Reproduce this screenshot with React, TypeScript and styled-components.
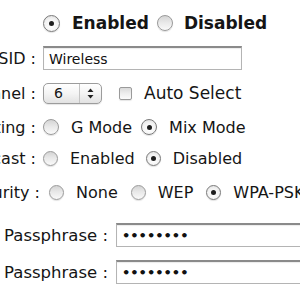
import React from "react";
import styled, { createGlobalStyle } from "styled-components";

const GlobalStyle = createGlobalStyle`
  html, body { margin: 0; padding: 0; background: #fff; }
  body {
    font-family: "DejaVu Sans", Verdana, sans-serif;
    color: #151515;
    overflow: hidden;
  }
`;

const Form = styled.div`
  width: 300px;
  height: 300px;
  overflow: hidden;
  padding-top: 6px;
  box-sizing: border-box;
`;

const Row = styled.div<{ $h: number }>`
  display: flex;
  align-items: center;
  height: ${(p) => p.$h}px;
`;

const Label = styled.div<{ $end: number; $size?: number }>`
  flex: 0 0 auto;
  width: 140px;
  margin-left: ${(p) => p.$end - 140}px;
  text-align: right;
  white-space: nowrap;
  font-size: ${(p) => p.$size ?? 16}px;
`;

const Controls = styled.div<{ $gap: number; $lead: number }>`
  display: flex;
  align-items: center;
  gap: ${(p) => p.$gap}px;
  margin-left: ${(p) => p.$lead}px;
  white-space: nowrap;
`;

const Option = styled.label<{ $gap?: number; $bold?: boolean; $size?: number }>`
  display: inline-flex;
  align-items: center;
  gap: ${(p) => p.$gap ?? 12}px;
  font-size: ${(p) => p.$size ?? 16}px;
  font-weight: ${(p) => (p.$bold ? 700 : 400)};
`;

const RadioCircle = styled.span<{ $on?: boolean; $size?: number }>`
  flex: 0 0 auto;
  width: ${(p) => p.$size ?? 15}px;
  height: ${(p) => p.$size ?? 15}px;
  box-sizing: border-box;
  border-radius: 50%;
  border: 1px solid ${(p) => (p.$on ? "#7a7a7a" : "#9a9a9a")};
  background: ${(p) =>
    p.$on
      ? "radial-gradient(circle at 50% 65%, #ffffff 0%, #f3f3f3 55%, #d6d6d6 100%)"
      : "linear-gradient(#d4d4d4 0%, #e8e8e8 45%, #fafafa 100%)"};
  box-shadow: 0 1px 1px rgba(0, 0, 0, 0.12);
  display: inline-flex;
  align-items: center;
  justify-content: center;
  &::after {
    content: "";
    display: ${(p) => (p.$on ? "block" : "none")};
    width: 5px;
    height: 5px;
    border-radius: 50%;
    background: #1e1e1e;
  }
`;

const TextBox = styled.div<{ $w: number; $h: number; $size?: number }>`
  flex: 0 0 auto;
  width: ${(p) => p.$w}px;
  height: ${(p) => p.$h}px;
  box-sizing: border-box;
  border: 1px solid #b4b4b4;
  border-top: 2px solid #8a8a8a;
  background: #fff;
  box-shadow: inset 0 1px 1px rgba(0, 0, 0, 0.08);
  display: flex;
  align-items: center;
  padding-left: 5px;
  font-size: ${(p) => p.$size ?? 14}px;
  color: #111;
`;

const Dots = styled.span`
  font-size: 13px;
  font-weight: 700;
  letter-spacing: 0;
`;

const SelectBox = styled.div`
  flex: 0 0 auto;
  width: 59px;
  height: 21px;
  box-sizing: border-box;
  border: 1px solid #9c9c9c;
  border-radius: 5px;
  background: linear-gradient(#ffffff 0%, #f4f4f4 50%, #e2e2e2 100%);
  display: flex;
  align-items: center;
  font-size: 14px;
  box-shadow: 0 1px 1px rgba(0, 0, 0, 0.1);
`;

const SelectValue = styled.span`
  flex: 1 1 auto;
  padding-left: 10px;
`;

const SelectArrows = styled.span`
  flex: 0 0 21px;
  height: 100%;
  border-left: 1px solid #c4c4c4;
  display: flex;
  align-items: center;
  justify-content: center;
`;

const CheckBox = styled.span`
  flex: 0 0 auto;
  width: 13px;
  height: 13px;
  box-sizing: border-box;
  border: 1px solid #9a9a9a;
  border-radius: 2px;
  background: linear-gradient(#dadada 0%, #eeeeee 50%, #fcfcfc 100%);
  box-shadow: 0 1px 1px rgba(0, 0, 0, 0.1);
`;

const Radio = ({ on, size, children }: { on?: boolean; size?: number; children: React.ReactNode }) => (
  <Option>
    <RadioCircle $on={on} $size={size} />
    <span>{children}</span>
  </Option>
);

export default function App() {
  return (
    <>
      <GlobalStyle />
      <Form>
        <Row $h={34}>
          <Label $end={36} />
          <Controls $lead={7} $gap={8}>
            <Option $bold $size={17} $gap={12}>
              <RadioCircle $on $size={17} />
              <span>Enabled</span>
            </Option>
            <Option $bold $size={17} $gap={11}>
              <RadioCircle $size={16} />
              <span>Disabled</span>
            </Option>
          </Controls>
        </Row>
        <Row $h={36}>
          <Label $end={36}>SSID :</Label>
          <Controls $lead={7} $gap={10}>
            <TextBox $w={199} $h={24}>Wireless</TextBox>
          </Controls>
        </Row>
        <Row $h={34}>
          <Label $end={36}>Channel :</Label>
          <Controls $lead={7} $gap={17}>
            <SelectBox>
              <SelectValue>6</SelectValue>
              <SelectArrows>
                <svg width="7" height="11" viewBox="0 0 7 11">
                  <path d="M3.5 0.5 L6.5 4 L0.5 4 Z" fill="#222" />
                  <path d="M3.5 10.5 L6.5 7 L0.5 7 Z" fill="#222" />
                </svg>
              </SelectArrows>
            </SelectBox>
            <Option $size={17} $gap={12}>
              <CheckBox />
              <span>Auto Select</span>
            </Option>
          </Controls>
        </Row>
        <Row $h={34}>
          <Label $end={36}>Mode Setting :</Label>
          <Controls $lead={7} $gap={9}>
            <Radio size={16}>G Mode</Radio>
            <Radio on size={16}>Mix Mode</Radio>
          </Controls>
        </Row>
        <Row $h={28}>
          <Label $end={36}>SSID Broadcast :</Label>
          <Controls $lead={7} $gap={11}>
            <Radio size={15}>Enabled</Radio>
            <Radio on size={15}>Disabled</Radio>
          </Controls>
        </Row>
        <Row $h={40}>
          <Label $end={40}>Security :</Label>
          <Controls $lead={9} $gap={13}>
            <Radio size={15}>None</Radio>
            <Radio size={15}>WEP</Radio>
            <Radio on size={15}>WPA-PSK</Radio>
          </Controls>
        </Row>
        <Row $h={46}>
          <Label $end={108} $size={16.5}>Passphrase :</Label>
          <Controls $lead={8} $gap={0}>
            <TextBox $w={200} $h={24}>
              <Dots>••••••••</Dots>
            </TextBox>
          </Controls>
        </Row>
        <Row $h={28}>
          <Label $end={108} $size={16.5}>Passphrase :</Label>
          <Controls $lead={8} $gap={0}>
            <TextBox $w={200} $h={24}>
              <Dots>••••••••</Dots>
            </TextBox>
          </Controls>
        </Row>
      </Form>
    </>
  );
}
